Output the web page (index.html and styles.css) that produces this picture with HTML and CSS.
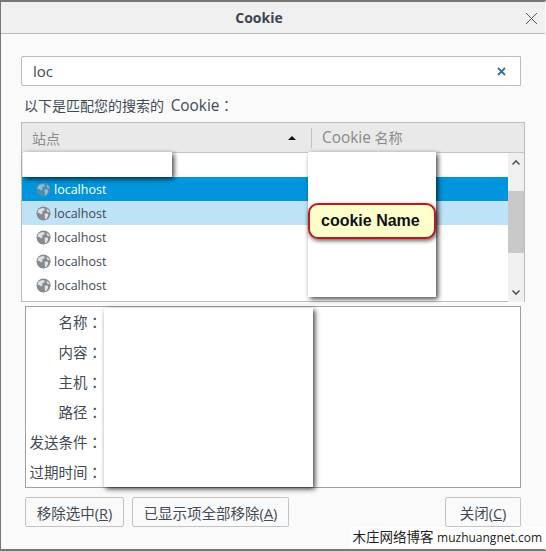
FILE: index.html
```html
<!DOCTYPE html>
<html lang="zh-CN">
<head>
  <meta charset="UTF-8">
  <title>Cookie</title>
  <link rel="stylesheet" href="styles.css">
</head>
<body>
  <svg class="svg-defs" width="0" height="0">
    <symbol id="globe" viewBox="0 0 16 16">
      <circle cx="8" cy="8" r="7.5" fill="#858a8e"/>
      <path d="M3 3.5 7 2 9.5 3 8.5 5 6.5 5.5 7 7.5 5.5 9 3.5 7.5 1.5 7ZM9 8 12.5 8 13 10.5 11 13.5 9.5 14 9.5 11ZM11 3 13.5 4.5 14.5 7 12 6Z" fill="#dfe2e4"/>
    </symbol>
  </svg>

  <div class="dialog">
    <div class="titlebar">
      <span class="title">Cookie</span>
      <svg class="close-x" width="13" height="13" viewBox="0 0 13 13"><path d="M1 1 12 12M12 1 1 12" stroke="#555" stroke-width="1" fill="none"/></svg>
    </div>

    <div class="content">
      <div class="search-box">
        <span>loc</span>
        <svg width="9" height="9" viewBox="0 0 9 9"><path d="M1 1 8 8M8 1 1 8" stroke="#3a6f9f" stroke-width="1.8" fill="none"/></svg>
      </div>
      <div class="search-label">以下是匹配您的搜索的 <span class="latin">Cookie</span><span class="colon" lang="zh-TW">：</span></div>

      <div class="tree">
        <div class="tree-head">
          <div class="col-site">站点<span class="sort-arrow"></span></div>
          <div class="col-name"><span class="latin">Cookie</span> 名称</div>
        </div>
        <div class="tree-body">
          <div class="rows">
            <div class="row"></div>
            <div class="row selected"><svg class="globe"><use href="#globe"/></svg>localhost</div>
            <div class="row hovered"><svg class="globe"><use href="#globe"/></svg>localhost</div>
            <div class="row"><svg class="globe"><use href="#globe"/></svg>localhost</div>
            <div class="row"><svg class="globe"><use href="#globe"/></svg>localhost</div>
            <div class="row"><svg class="globe"><use href="#globe"/></svg>localhost</div>
          </div>
          <div class="scrollbar">
            <svg width="10" height="7" viewBox="0 0 10 7"><path d="M1.5 5.5 5 2 8.5 5.5" stroke="#555" stroke-width="1.6" fill="none"/></svg>
            <div class="scroll-track"><div class="scroll-thumb"></div></div>
            <svg width="10" height="7" viewBox="0 0 10 7"><path d="M1.5 1.5 5 5 8.5 1.5" stroke="#555" stroke-width="1.6" fill="none"/></svg>
          </div>
        </div>
      </div>

      <div class="details">
        <div class="detail-row">名称<span class="colon" lang="zh-TW">：</span></div>
        <div class="detail-row">内容<span class="colon" lang="zh-TW">：</span></div>
        <div class="detail-row">主机<span class="colon" lang="zh-TW">：</span></div>
        <div class="detail-row">路径<span class="colon" lang="zh-TW">：</span></div>
        <div class="detail-row">发送条件<span class="colon" lang="zh-TW">：</span></div>
        <div class="detail-row">过期时间<span class="colon" lang="zh-TW">：</span></div>
      </div>

      <div class="buttons">
        <button class="btn btn-remove">移除选中(<u>R</u>)</button>
        <button class="btn btn-remove-all">已显示项全部移除(<u>A</u>)</button>
        <button class="btn btn-close">关闭(<u>C</u>)</button>
      </div>
    </div>
  </div>

  <!-- white blocks pasted over the screenshot -->
  <div class="mask mask-site"></div>
  <div class="mask mask-name"></div>
  <div class="mask mask-detail"></div>
  <div class="balloon">cookie Name</div>
  <div class="watermark">木庄网络博客 <span class="watermark-url">muzhuangnet.com</span></div>
</body>
</html>
```

FILE: styles.css
```css
html, body {
  margin: 0;
  height: 100%;
  overflow: hidden;
  background: #fff;
}
body {
  position: relative;
  width: 546px;
  height: 551px;
  font-family: "Open Sans", "Noto Sans CJK SC", sans-serif;
  color: #3f4a55;
}
.svg-defs {
  position: absolute;
}
.latin {
  font-size: 1.1em;
}
/* the centred full-width colon of the original */
.colon {
  font-family: "Noto Sans CJK TC", sans-serif;
}
.dialog {
  box-sizing: border-box;
  width: 546px;
  height: 551px;
  display: flex;
  flex-direction: column;
  background: #fafafa;
  border-top: 2px solid #777;
  border-left: 1px solid #777;
  border-right: 1px solid #fff;
  border-bottom: 2px solid #777;
}
.titlebar {
  flex: none;
  height: 31px;
  display: flex;
  align-items: center;
  justify-content: center;
  position: relative;
  padding-right: 28px;
  background: #f0f0f0;
  border-bottom: 1px solid #bbb;
}
.title {
  font-size: 14px;
  font-weight: 700;
  color: #3c4550;
}
.close-x {
  position: absolute;
  right: 7px;
  top: 10px;
}
.content {
  flex: 1;
  padding: 22px 0 0 20px;
}
.search-box {
  box-sizing: border-box;
  width: 500px;
  height: 30px;
  display: flex;
  align-items: center;
  justify-content: space-between;
  padding: 0 14px 0 11px;
  background: #fff;
  border: 1px solid #bcbcbc;
  border-radius: 2px 0 0 2px;
  font-size: 15px;
}
.search-label {
  height: 36px;
  line-height: 38px;
  padding-left: 3px;
  font-size: 14px;
  word-spacing: 3px;
}
.tree {
  box-sizing: border-box;
  width: 504px;
  height: 180px;
  border: 1px solid #bcbcbc;
  background: #fff;
}
.tree-head {
  height: 29px;
  display: flex;
  align-items: center;
  background: #e9e9e9;
  border-bottom: 1px solid #c4c4c4;
  font-size: 14px;
  color: #8a8a8a;
}
.col-site {
  width: 289px;
  padding-left: 10px;
  box-sizing: border-box;
  position: relative;
}
.sort-arrow {
  position: absolute;
  left: 266px;
  top: 8px;
  border-left: 4px solid transparent;
  border-right: 4px solid transparent;
  border-bottom: 4px solid #111;
}
.col-name {
  border-left: 1px solid #c0c0c0;
  padding-left: 10px;
  line-height: 20px;
}
.tree-body {
  display: flex;
  height: 149px;
}
.rows {
  flex: 1;
}
.row {
  height: 24px;
  display: flex;
  align-items: center;
  padding-left: 14px;
  font-size: 12.5px;
  color: #3f4a55;
}
.row.selected {
  background: #0095dc;
  color: #fff;
}
.row.selected .globe {
  opacity: 0.6;
}
.row.hovered {
  background: #bee3f6;
}
.globe {
  width: 15px;
  height: 15px;
  margin-right: 3px;
}
.scrollbar {
  flex: none;
  width: 16px;
  display: flex;
  flex-direction: column;
  align-items: center;
  background: #f0f0f0;
  padding: 6px 0;
  box-sizing: border-box;
}
.scroll-track {
  flex: 1;
  width: 100%;
}
.scroll-thumb {
  height: 62px;
  margin-top: 25px;
  background: #c8c8c8;
}
.details {
  box-sizing: border-box;
  width: 496px;
  height: 182px;
  margin: 4px 0 0 4px;
  border: 1px solid #a0a0a0;
  background: #fff;
}
.detail-row {
  box-sizing: border-box;
  width: 76px;
  height: 30px;
  line-height: 29px;
  text-align: right;
  font-size: 14.5px;
  white-space: nowrap;
}
.buttons {
  display: flex;
  width: 496px;
  margin: 9px 0 0 4px;
  gap: 8px;
}
.btn {
  height: 30px;
  padding: 0;
  background: #fafafa;
  border: 1px solid #c4c4c4;
  border-radius: 2px;
  font-family: inherit;
  font-size: 14.5px;
  color: #3f4a55;
}
.btn-remove {
  width: 99px;
}
.btn-remove-all {
  width: 157px;
}
.btn-close {
  width: 76px;
  margin-left: auto;
}
.mask {
  position: absolute;
  background: #fff;
  box-shadow: 2px 2px 5px rgba(0, 0, 0, 0.75);
}
.mask-site {
  left: 23px;
  top: 152px;
  width: 149px;
  height: 25px;
}
.mask-name {
  left: 308px;
  top: 152px;
  width: 128px;
  height: 145px;
}
.mask-detail {
  left: 104px;
  top: 308px;
  width: 209px;
  height: 179px;
}
.balloon {
  position: absolute;
  box-sizing: border-box;
  left: 308px;
  top: 203px;
  width: 128px;
  height: 36px;
  padding-left: 11px;
  line-height: 31px;
  background: #ffffcc;
  border: 2px solid #c4161c;
  border-radius: 10px;
  box-shadow: 1px 2px 4px rgba(0, 0, 0, 0.6);
  font-family: "Liberation Sans", sans-serif;
  font-size: 16px;
  font-weight: 700;
  color: #111;
}
.watermark {
  position: absolute;
  right: 0;
  bottom: 4px;
  padding: 0 4px 0 3px;
  height: 20px;
  line-height: 20px;
  background: #fff;
  font-family: "Open Sans", "Noto Sans CJK SC", sans-serif;
  font-size: 13.5px;
  color: #222;
  white-space: nowrap;
}
.watermark-url {
  font-size: 12px;
}
```
